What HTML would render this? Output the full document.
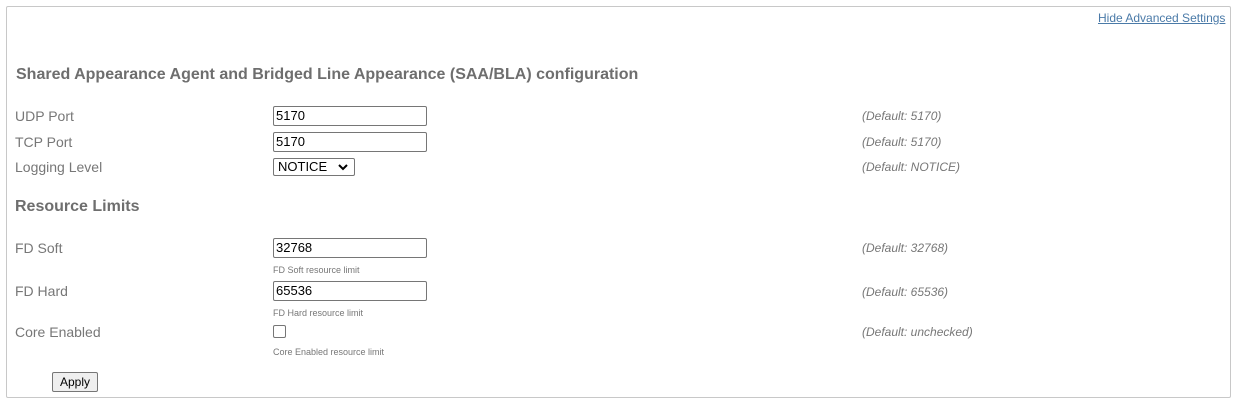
<!DOCTYPE html>
<html><head><style>
body{margin:0;width:1238px;height:407px;background:#fff;font-family:"Liberation Sans",sans-serif;position:relative;overflow:hidden}
.box{position:absolute;left:6px;top:6px;width:1223px;height:390px;border:1px solid #c8c8c8;border-radius:2px}
.a{position:absolute;white-space:nowrap}
.lbl{font-size:14px;color:#777}
.def{font-size:12px;color:#777;font-style:italic;left:862px}
.h{font-size:16px;font-weight:bold;color:#6e6e6e}
.in{position:absolute;left:273px;width:150px;height:18px;border:1px solid #767676;border-radius:2px;font-size:13px;line-height:18px;padding-left:2px;color:#000}
.hint{font-size:9px;color:#777;left:273px}
</style></head><body>
<div class="box"></div>
<div class="a" style="left:1098px;top:11px;font-size:12px;color:#4a7aa8;text-decoration:underline">Hide Advanced Settings</div>
<div class="a h" style="left:16px;top:66px">Shared Appearance Agent and Bridged Line Appearance (SAA/BLA) configuration</div>
<div class="a lbl" style="left:15px;top:108px">UDP Port</div>
<div class="in" style="top:106px">5170</div>
<div class="a def" style="top:109px">(Default: 5170)</div>
<div class="a lbl" style="left:15px;top:134px">TCP Port</div>
<div class="in" style="top:132px">5170</div>
<div class="a def" style="top:135px">(Default: 5170)</div>
<div class="a lbl" style="left:15px;top:159px">Logging Level</div>
<div class="in" style="top:158px;width:76px;height:16px;line-height:16px;padding-left:4px">NOTICE<svg style="position:absolute;left:64px;top:5px" width="10" height="7" viewBox="0 0 10 7"><path d="M1 1L5 5L9 1" stroke="#000" stroke-width="2" fill="none"/></svg></div>
<div class="a def" style="top:160px">(Default: NOTICE)</div>
<div class="a h" style="left:15px;top:198px">Resource Limits</div>
<div class="a lbl" style="left:15px;top:240px">FD Soft</div>
<div class="in" style="top:238px">32768</div>
<div class="a def" style="top:241px">(Default: 32768)</div>
<div class="a hint" style="top:265px">FD Soft resource limit</div>
<div class="a lbl" style="left:15px;top:283px">FD Hard</div>
<div class="in" style="top:281px">65536</div>
<div class="a def" style="top:285px">(Default: 65536)</div>
<div class="a hint" style="top:308px">FD Hard resource limit</div>
<div class="a lbl" style="left:15px;top:324px">Core Enabled</div>
<div class="a" style="left:273px;top:325px;width:11px;height:11px;border:1px solid #767676;border-radius:2px"></div>
<div class="a def" style="top:325px">(Default: unchecked)</div>
<div class="a hint" style="top:347px">Core Enabled resource limit</div>
<div class="a" style="left:52px;top:372px;width:44px;height:18px;border:1px solid #767676;border-radius:2px;background:#efefef;font-size:12px;text-align:center;line-height:18px">Apply</div>
</body></html>
